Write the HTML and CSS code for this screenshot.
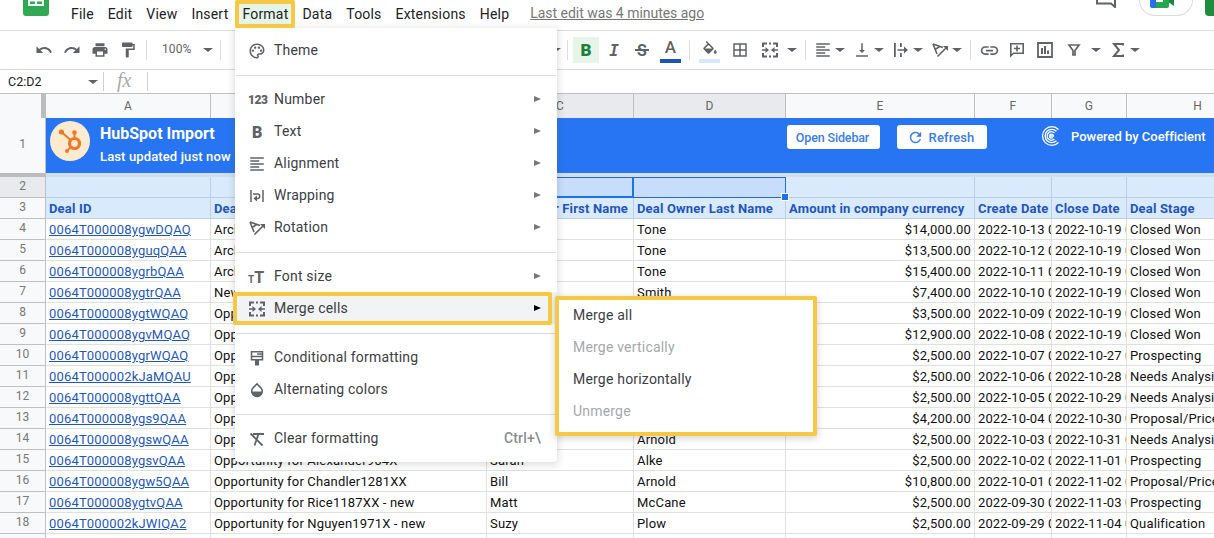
FILE: index.html
```html
<!DOCTYPE html>
<html lang="en">
<head>
  <meta charset="UTF-8">
  <title>HubSpot Import - Sheet</title>
  <link rel="stylesheet" href="styles.css">
</head>
<body>
  <!-- shared icons -->
  <svg class="sprite">
    <symbol id="merge" viewBox="0 0 18 18">
      <path d="M2 6V2.500h4M12 2.500h4V6M2 12v3.500h4M12 15.500h4V12" fill="none" stroke="currentColor" stroke-width="2"/>
      <path d="M8 1.500h2v2H8zM8 14.500h2v2H8zM1 8.200h3.500V6L8 9l-3.500 3V9.800H1zM17 8.200h-3.500V6L10 9l3.500 3V9.800H17z"/>
    </symbol>
    <symbol id="align" viewBox="0 0 24 24"><path d="M15 15H3v2h12v-2zm0-8H3v2h12V7zM3 13h18v-2H3v2zm0 8h18v-2H3v2zM3 3v2h18V3H3z"/></symbol>
    <symbol id="rotate" viewBox="0 0 18 18">
      <path d="M2 3l10 3.500M2 3l4 10M4 8.500l5-3.200M6.500 15.500L15.500 6.500" fill="none" stroke="currentColor" stroke-width="1.600"/>
      <path d="M12 5h5v5z"/>
    </symbol>
  </svg>

  <header class="menubar">
    <svg class="logo" viewBox="0 0 26 16"><path fill="#31a854" d="M0 0h26v13q0 3-3 3H3q-3 0-3-3z"/><path d="M6 0v5h14V0M6 .500h14M13 0v5" fill="none" stroke="#fff" stroke-width="1.800"/></svg>
    <nav class="menus">
      <span>File</span><span>Edit</span><span>View</span><span>Insert</span><span class="active">Format</span><span>Data</span><span>Tools</span><span>Extensions</span><span>Help</span>
    </nav>
    <a class="last-edit">Last edit was 4 minutes ago</a>
    <div class="account">
      <svg class="comments" viewBox="0 0 20 8"><path d="M1 0v3.500h14l4 3.500V0" fill="none" stroke="#5f6368" stroke-width="2"/></svg>
      <div class="meet">
        <svg viewBox="0 0 24 8"><path fill="#2671e8" d="M0 0h6v8H2q-2 0-2-2z"/><path fill="#26a750" d="M6 2h7V0h6v6q0 2-2 2H6z"/><path fill="#188a3c" d="M19 0h5v6l-5-3.500z"/></svg>
      </div>
      <div class="share"></div>
    </div>
  </header>

  <div class="toolbar">
    <span class="tool"><svg viewBox="0 0 24 24"><path d="M12.500 8c-2.650 0-5.050.99-6.900 2.600L2 7v9h9l-3.620-3.620c1.390-1.160 3.160-1.880 5.120-1.880 3.540 0 6.550 2.310 7.600 5.500l2.370-.78C21.080 11.030 17.150 8 12.500 8z"/></svg></span>
    <span class="tool"><svg viewBox="0 0 24 24"><path d="M18.400 10.600C16.550 8.990 14.150 8 11.500 8c-4.650 0-8.580 3.030-9.960 7.220L3.900 16c1.050-3.190 4.050-5.500 7.600-5.500 1.950 0 3.730.72 5.120 1.880L13 16h9V7l-3.600 3.600z"/></svg></span>
    <span class="tool"><svg viewBox="0 0 24 24"><path d="M19 8H5c-1.660 0-3 1.340-3 3v6h4v4h12v-4h4v-6c0-1.660-1.340-3-3-3zm-3 11H8v-5h8v5zm3-7c-.55 0-1-.45-1-1s.45-1 1-1 1 .45 1 1-.45 1-1 1zm-1-9H6v4h12V3z"/></svg></span>
    <span class="tool"><svg viewBox="0 0 24 24"><path d="M18 4V3c0-.55-.45-1-1-1H5c-.55 0-1 .45-1 1v4c0 .55.45 1 1 1h12c.55 0 1-.45 1-1V6h1v4H9v11c0 .55.45 1 1 1h2c.55 0 1-.45 1-1v-9h8V4h-3z"/></svg></span>
    <i class="sep ml4"></i>
    <span class="zoom">100%</span><i class="caret"></i>
    <i class="sep ml7"></i>
    <span class="font-tools"><i class="caret"></i></span>
    <i class="sep ml6"></i>
    <span class="tool bold-on">B</span>
    <span class="tool italic">I</span>
    <span class="tool strike">S</span>
    <span class="tool color-text">A</span>
    <i class="sep ml5"></i>
    <span class="tool fill"><svg viewBox="0 0 24 24"><path d="M16.560 8.940L7.620 0 6.210 1.410l2.380 2.380-5.150 5.150c-.59.59-.59 1.540 0 2.120l5.500 5.500c.29.29.68.44 1.060.44s.77-.15 1.060-.44l5.500-5.500c.59-.58.59-1.530 0-2.120zM5.210 10L10 5.210 14.790 10zM19 11.500s-2 2.170-2 3.500c0 1.100.9 2 2 2s2-.9 2-2c0-1.330-2-3.500-2-3.500z"/></svg></span>
    <span class="tool ml2"><svg viewBox="0 0 24 24"><path d="M3 3v18h18V3H3zm8 16H5v-6h6v6zm0-8H5V5h6v6zm8 8h-6v-6h6v6zm0-8h-6V5h6v6z"/></svg></span>
    <span class="tool ml2"><svg><use href="#merge"/></svg></span>
    <i class="caret ml3"></i>
    <i class="sep ml8"></i>
    <span class="combo ml5"><svg><use href="#align"/></svg><i class="caret"></i></span>
    <span class="combo"><svg viewBox="0 0 24 24"><path d="M16 12h-3V3h-2v9H8l4 4 4-4zM4 19v2h16v-2H4z"/></svg><i class="caret"></i></span>
    <span class="combo"><svg viewBox="0 0 18 18"><path d="M2 2h1.800v14H2zM8 2h1.800v4H8zM8 12h1.800v4H8zM5.500 8.200H12V5.500L16 9l-4 3.500V9.800H5.500z"/></svg><i class="caret"></i></span>
    <span class="combo"><svg><use href="#rotate"/></svg><i class="caret"></i></span>
    <i class="sep ml3"></i>
    <span class="tool big ml4"><svg viewBox="0 0 24 24"><path d="M3.900 12c0-1.710 1.390-3.100 3.100-3.100h4V7H7c-2.760 0-5 2.240-5 5s2.240 5 5 5h4v-1.900H7c-1.710 0-3.100-1.390-3.100-3.100zM8 13h8v-2H8v2zm9-6h-4v1.900h4c1.710 0 3.100 1.390 3.100 3.100s-1.390 3.100-3.100 3.100h-4V17h4c2.760 0 5-2.240 5-5s-2.240-5-5-5z"/></svg></span>
    <span class="tool"><svg viewBox="0 0 18 18"><path d="M2.800 2.800h12.400v9.400H5.500l-2.700 2.700zM9 4.500v6M6 7.500h6" fill="none" stroke="currentColor" stroke-width="1.600"/></svg></span>
    <span class="tool"><svg viewBox="0 0 18 18"><path d="M2 2h14v14H2z" fill="none" stroke="currentColor" stroke-width="1.800"/><path d="M5 7h2v6H5zM8 5h2v8H8zM11 9.500h2V13h-2z"/></svg></span>
    <span class="tool ml1"><svg viewBox="0 0 18 18"><path d="M4 4h10l-4 5.500V14H8V9.500z" fill="none" stroke="currentColor" stroke-width="1.700"/></svg></span>
    <i class="caret ml3"></i>
    <span class="combo ml5"><svg viewBox="0 0 18 18"><path d="M14 4.500V3H5l5 6-5 6h9v-1.500" fill="none" stroke="currentColor" stroke-width="2"/></svg><i class="caret"></i></span>
  </div>

  <div class="formula-bar">
    <span class="name-box">C2:D2</span><i class="caret"></i>
    <span class="fx">fx</span>
  </div>

  <main class="sheet">
    <div class="row col-heads">
      <b class="corner"></b><b>A</b><b>B</b><b class="sel">C</b><b class="sel">D</b><b>E</b><b>F</b><b>G</b><b>H</b>
    </div>
    <div class="banner-row">
      <div class="row-num">1</div>
      <div class="banner">
        <svg class="hubspot" viewBox="0 0 40 40">
          <circle cx="20" cy="20" r="20" fill="#fdebd0"/>
          <g fill="none" stroke="#f0782d"><circle cx="24.500" cy="22.500" r="5" stroke-width="3.200"/><path d="M11.500 11l9 8M24.500 12v6M20.500 26.500l-3.500 3.500" stroke-width="2"/></g>
          <g fill="#f0782d"><circle cx="11.500" cy="11" r="2.600"/><circle cx="24.500" cy="11.500" r="2.300"/><circle cx="17" cy="30" r="2"/></g>
        </svg>
        <div class="banner-text"><h1>HubSpot Import</h1><p>Last updated just now</p></div>
        <button class="open-btn">Open Sidebar</button>
        <button class="refresh-btn"><svg viewBox="0 0 24 24"><path d="M17.650 6.350C16.200 4.900 14.210 4 12 4c-4.420 0-7.990 3.580-7.990 8s3.570 8 7.990 8c3.730 0 6.840-2.550 7.730-6h-2.080c-.82 2.330-3.040 4-5.650 4-3.310 0-6-2.690-6-6s2.690-6 6-6c1.660 0 3.140.69 4.220 1.780L13 11h7V4l-2.350 2.350z"/></svg>Refresh</button>
        <div class="powered">
          <svg viewBox="0 0 20 20"><g fill="none" stroke="#fff" stroke-width="1.300"><path d="M17.500 3.500A9.300 9.300 0 1 0 17.500 16.500"/><path d="M15.500 5.200A6.700 6.700 0 1 0 15.500 14.800"/><path d="M13.500 7A4.300 4.300 0 1 0 13.500 13"/><path d="M8.500 10h4a2 2 0 1 0-.6 1.500"/></g></svg>
          Powered by Coefficient
        </div>
      </div>
    </div>
    <div class="freeze"></div>
    <div class="row blank">
      <b class="row-num sel">2</b><span></span><span></span><span class="sel current"></span><span class="sel last"><i class="handle"></i></span><span></span><span></span><span></span><span></span>
    </div>
    <div class="row titles">
      <b class="row-num">3</b><span>Deal ID</span><span>Deal Name</span><span class="right">Deal Owner First Name</span><span>Deal Owner Last Name</span><span>Amount in company currency</span><span>Create Date</span><span>Close Date</span><span>Deal Stage</span>
    </div>
    <div id="rows"></div>
  </main>

  <div class="menu">
    <div class="item"><svg viewBox="0 0 24 24"><path d="M12 22C6.490 22 2 17.510 2 12S6.490 2 12 2s10 4.040 10 9c0 3.310-2.690 6-6 6h-1.770c-.28 0-.5.22-.5.5 0 .12.05.23.13.33.41.47.64 1.060.64 1.670 0 1.380-1.120 2.500-2.500 2.500zm0-18c-4.410 0-8 3.590-8 8s3.590 8 8 8c.28 0 .5-.22.5-.5 0-.16-.08-.28-.14-.35-.41-.46-.63-1.050-.63-1.650 0-1.380 1.120-2.500 2.500-2.500H16c2.210 0 4-1.790 4-4 0-3.860-3.590-7-8-7z"/><circle cx="6.500" cy="11.500" r="1.600"/><circle cx="9.500" cy="7.500" r="1.600"/><circle cx="14.500" cy="7.500" r="1.600"/><circle cx="17.500" cy="11.500" r="1.600"/></svg>Theme</div>
    <hr>
    <div class="item sub"><span class="ico num">123</span>Number</div>
    <div class="item sub"><span class="ico b">B</span>Text</div>
    <div class="item sub"><svg><use href="#align"/></svg>Alignment</div>
    <div class="item sub"><svg viewBox="0 0 18 18"><path d="M3 3v12M15 3v12M5 7h5a2.300 2.300 0 0 1 0 4.500H8" fill="none" stroke="currentColor" stroke-width="1.500"/><path d="M9 8.500v6l-3.500-3z"/></svg>Wrapping</div>
    <div class="item sub"><svg><use href="#rotate"/></svg>Rotation</div>
    <hr>
    <div class="item sub"><span class="ico tt"><small>T</small>T</span>Font size</div>
    <div class="item sub hover"><svg><use href="#merge"/></svg>Merge cells</div>
    <hr>
    <div class="item"><svg viewBox="0 0 18 18"><path d="M3.500 2.800h11v8h-11zM3.500 7.500h11M9 5h5" fill="none" stroke="currentColor" stroke-width="1.500"/><path d="M7 11h4v5.500H7z"/></svg>Conditional formatting</div>
    <div class="item"><svg viewBox="0 0 24 24"><path d="M17.660 8L12 2.350 6.340 8C4.780 9.560 4 11.640 4 13.640s.78 4.110 2.340 5.670 3.610 2.350 5.660 2.350 4.100-.79 5.660-2.350S20 15.640 20 13.640 19.220 9.560 17.660 8zM6 14c.01-2 .62-3.270 1.760-4.400L12 5.270l4.240 4.380C17.380 10.770 17.990 12 18 14H6z"/></svg>Alternating colors</div>
    <hr>
    <div class="item"><svg viewBox="0 0 18 18"><path d="M5 4h11M2.500 3.500l12 12M10.500 4L6.500 15.500" fill="none" stroke="currentColor" stroke-width="1.800"/></svg>Clear formatting<kbd>Ctrl+\</kbd></div>
  </div>

  <div class="submenu">
    <div>Merge all</div>
    <div class="off">Merge vertically</div>
    <div>Merge horizontally</div>
    <div class="off">Unmerge</div>
  </div>
  <div class="mark mark-format"></div>
  <div class="mark mark-merge"></div>

  <script>
    // id, deal name, first name, last name, amount, created, closed, stage
    const deals = [
      ["0064T000008ygwDQAQ", "Arch", "", "Tone", "$14,000.00", "2022-10-13", "2022-10-19", "Closed Won"],
      ["0064T000008yguqQAA", "Arch", "", "Tone", "$13,500.00", "2022-10-12", "2022-10-19", "Closed Won"],
      ["0064T000008ygrbQAA", "Arch", "", "Tone", "$15,400.00", "2022-10-11", "2022-10-19", "Closed Won"],
      ["0064T000008ygtrQAA", "New", "", "Smith", "$7,400.00", "2022-10-10", "2022-10-19", "Closed Won"],
      ["0064T000008ygtWQAQ", "Opp", "", "", "$3,500.00", "2022-10-09", "2022-10-19", "Closed Won"],
      ["0064T000008ygvMQAQ", "Opp", "", "", "$12,900.00", "2022-10-08", "2022-10-19", "Closed Won"],
      ["0064T000008ygrWQAQ", "Opp", "", "", "$2,500.00", "2022-10-07", "2022-10-27", "Prospecting"],
      ["0064T000002kJaMQAU", "Opp", "", "", "$2,500.00", "2022-10-06", "2022-10-28", "Needs Analysis"],
      ["0064T000008ygttQAA", "Opp", "", "", "$2,500.00", "2022-10-05", "2022-10-29", "Needs Analysis"],
      ["0064T000008ygs9QAA", "Opp", "", "", "$4,200.00", "2022-10-04", "2022-10-30", "Proposal/Price"],
      ["0064T000008ygswQAA", "Opp", "", "Arnold", "$2,500.00", "2022-10-03", "2022-10-31", "Needs Analysis"],
      ["0064T000008ygsvQAA", "Opportunity for Alexander964X", "Sarah", "Alke", "$2,500.00", "2022-10-02", "2022-11-01", "Prospecting"],
      ["0064T000008ygw5QAA", "Opportunity for Chandler1281XX", "Bill", "Arnold", "$10,800.00", "2022-10-01", "2022-11-02", "Proposal/Price"],
      ["0064T000008ygtvQAA", "Opportunity for Rice1187XX - new", "Matt", "McCane", "$2,500.00", "2022-09-30", "2022-11-03", "Prospecting"],
      ["0064T000002kJWIQA2", "Opportunity for Nguyen1971X - new", "Suzy", "Plow", "$2,500.00", "2022-09-29", "2022-11-04", "Qualification"],
      ["", "", "", "", "", "", "", ""]
    ];

    document.getElementById("rows").innerHTML = deals.map((d, i) => {
      const cells = d.map((text, c) => {
        if (c === 0) return `<span><a>${text}</a></span>`;
        if (c === 4) return `<span class="right">${text}</span>`;
        // the time part runs into the next column and is cut there
        if ((c === 5 || c === 6) && text) return `<span class="date">${text} 0</span>`;
        return `<span>${text}</span>`;
      });
      return `<div class="row"><b class="row-num">${i + 4}</b>${cells.join("")}</div>`;
    }).join("");
  </script>
</body>
</html>
```
FILE: styles.css
```css
* { box-sizing: border-box; }
body {
  margin: 0;
  width: 1214px;
  height: 538px;
  overflow: hidden;
  position: relative;
  background: #fff;
  color: #202124;
  font-family: Roboto, Arial, sans-serif;
  font-size: 13px;
}
svg { fill: currentColor; flex: none; }
.sprite { display: none; }

/* menu bar */
.menubar {
  height: 31px;
  display: flex;
  border-bottom: 1px solid #dadce0;
}
.logo { width: 26px; height: 16px; margin-left: 23px; }
.menus {
  display: flex;
  margin-left: 15px;
  font-size: 14px;
  line-height: 28px;
  letter-spacing: .2px;
}
.menus span { height: 28px; padding: 0 7px; }
.menus .active { background: #e6f4ea; }
.last-edit {
  margin-left: 14px;
  font-size: 14px;
  line-height: 27px;
  letter-spacing: -.03px;
  color: #777;
  text-decoration: underline;
}
.account { display: flex; margin-left: auto; }
.comments { width: 20px; height: 8px; margin-right: 23px; }
.meet {
  width: 54px;
  height: 16px;
  padding-left: 10px;
  border: 1px solid #dadce0;
  border-top: 0;
  border-radius: 0 0 22px 22px;
  margin-right: 12px;
}
.meet svg { display: block; width: 24px; height: 8px; }
.share { width: 9px; height: 16px; background: #1e8e3e; border-radius: 0 0 0 4px; }

/* toolbar */
.toolbar {
  height: 39px;
  display: flex;
  align-items: center;
  padding-left: 30px;
  border-bottom: 1px solid #dadce0;
  color: #5f6368;
}
.tool {
  width: 28px;
  height: 26px;
  display: flex;
  flex: none;
  align-items: center;
  justify-content: center;
}
.tool svg { width: 18px; height: 18px; }
.tool.big svg { width: 21px; height: 21px; }
.sep { flex: none; width: 1px; height: 20px; background: #dadce0; }
.caret {
  flex: none;
  width: 10px;
  height: 4px;
  border: solid transparent;
  border-width: 4px 5px 0;
  border-top-color: #5f6368;
  background-clip: padding-box;
}
.combo { width: 39px; flex: none; display: flex; align-items: center; }
.combo svg { width: 18px; height: 18px; margin: 0 3px; }
.ml1 { margin-left: 1px; }
.ml2 { margin-left: 2px; }
.ml3 { margin-left: 3px; }
.ml4 { margin-left: 4px; }
.ml5 { margin-left: 5px; }
.ml6 { margin-left: 6px; }
.ml7 { margin-left: 7px; }
.ml8 { margin-left: 8px; }
.zoom { width: 41px; margin-left: 15px; padding-bottom: 2px; font-size: 12px; letter-spacing: .1px; }
.font-tools { width: 340px; flex: none; display: flex; justify-content: flex-end; }
.bold-on {
  width: 26px;
  margin-left: 5px;
  background: #e6f4ea;
  color: #188038;
  font-size: 17px;
  font-weight: 900;
}
.italic { margin-left: 1px; font: italic bold 16px "DejaVu Sans Mono", monospace; }
.strike { font-size: 16px; font-weight: 700; position: relative; }
.strike::after {
  content: "";
  position: absolute;
  left: 7px;
  top: 12px;
  width: 14px;
  height: 2px;
  background: #5f6368;
}
.color-text {
  width: 21px;
  margin-left: 4px;
  margin-right: 3px;
  font-size: 17px;
  font-weight: 500;
  line-height: 20px;
  align-items: flex-start;
  border-bottom: 4px solid #1a56b8;
}
.fill {
  width: 21px;
  margin: 0 4px 0 9px;
  border-bottom: 4px solid #d8e7fb;
}
.fill svg { position: relative; top: 2px; }

/* formula bar */
.formula-bar {
  height: 23px;
  display: flex;
  align-items: center;
}
.name-box { width: 80px; padding-left: 8px; font-size: 12.500px; }
.name-box + .caret { margin-left: 8px; }
.fx {
  margin-left: 5px;
  width: 45px;
  height: 19px;
  padding-left: 13px;
  border: solid #d0d0d0;
  border-width: 0 1px;
  font: italic 20px/17px "Liberation Serif", serif;
  color: #aaa;
}

/* grid */
.row {
  display: grid;
  grid-template-columns: 46px 165px 276px 147px 152px 189px 77px 75px 142px;
  height: 21px;
  color: #111;
  letter-spacing: .17px;
}
.row > span {
  border-right: 1px solid #e0e0e0;
  border-bottom: 1px solid #e0e0e0;
  padding-left: 3px;
  line-height: 22px;
  white-space: nowrap;
  overflow: hidden;
}
.row > .right { text-align: right; padding-right: 3px; }
.row > .date { letter-spacing: .1px; }
.row a { color: #1f57b8; text-decoration: underline; }
.row > .row-num, .row-num {
  background: #f8f9fa;
  border-right: 1px solid #c0c0c0;
  border-bottom: 1px solid #c0c0c0;
  color: #777;
  font-size: 12px;
  font-weight: 400;
  line-height: 18px;
  letter-spacing: 0;
  text-align: center;
}
.row > .row-num.sel { background: #e8eaed; }
.col-heads { height: 25px; border-top: 1px solid #c0c0c0; }
.col-heads b {
  background: #f8f9fa;
  border-right: 1px solid #c0c0c0;
  border-bottom: 1px solid #c0c0c0;
  color: #666;
  font-size: 12px;
  font-weight: 400;
  line-height: 24px;
  text-align: center;
}
.col-heads .sel { background: #e8eaed; }
.col-heads .corner { border-right: 5px solid #bcbcbc; }
.freeze { height: 4px; background: linear-gradient(90deg, #bcbcbc 46px, #d3deeb 46px); }
.blank > span, .titles > span {
  background: #d9eafd;
  border-color: #bccfe4;
}
.titles > span { color: #1f55bd; font-weight: 700; }
.titles > .right { padding-right: 5px; }
.blank > .sel {
  background: #c6defb;
  border-top: 1px solid #2468cc;
  border-bottom: 1px solid #2468cc;
}
.blank > .row-num.sel { border-top: 0; border-bottom-color: #c0c0c0; }
.blank > .current {
  border-right: 2px solid #1a73e8;
  border-bottom: 2px solid #1a73e8;
}
.blank > .last { border-right: 1px solid #1a73e8; position: relative; overflow: visible; }
.handle {
  position: absolute;
  right: -4px;
  bottom: -4px;
  width: 8px;
  height: 8px;
  background: #1a73e8;
  border: 1px solid #fff;
}

/* import banner */
.banner-row { display: flex; height: 55px; }
.banner-row .row-num { width: 46px; line-height: 53px; border-bottom: 0; }
.banner {
  flex: 1;
  display: flex;
  align-items: flex-start;
  background: #2775f2;
  color: #fff;
  padding-left: 4px;
}
.hubspot { width: 40px; height: 40px; margin-top: 3px; }
.banner-text { width: 687px; margin-left: 10px; }
.banner-text h1 { margin: 6px 0 0; font-size: 16px; line-height: 20px; letter-spacing: 0; }
.banner-text p { margin: 4px 0 0; font-weight: 500; line-height: 18px; letter-spacing: .13px; }
.banner button {
  height: 24px;
  margin-top: 7px;
  padding: 0;
  border: 0;
  border-radius: 3px;
  background: #fff;
  color: #3b7de8;
  font: 500 13px Roboto, sans-serif;
  display: flex;
  align-items: center;
  justify-content: center;
}
.banner .open-btn { width: 93px; padding-right: 2px; font-size: 12.500px; letter-spacing: -.15px; }
.banner .refresh-btn { width: 90px; margin-left: 17px; padding-right: 3px; gap: 5px; letter-spacing: .1px; }
.refresh-btn svg { width: 17px; height: 17px; }
.powered {
  display: flex;
  align-items: center;
  gap: 10px;
  margin: 8px 0 0 54px;
  font-weight: 500;
  letter-spacing: -.02px;
  white-space: nowrap;
}
.powered svg { width: 20px; height: 20px; }

/* format menu */
.menu {
  position: absolute;
  left: 235px;
  top: 28px;
  width: 322px;
  height: 434px;
  padding-top: 6px;
  background: #fff;
  border-radius: 0 0 4px 4px;
  box-shadow: 0 2px 6px 2px rgba(60, 64, 67, .15);
  font-size: 14px;
  letter-spacing: .2px;
  color: #3c4043;
}
.menu hr { margin: 9px 1px 7px; border: 0; height: 1px; background: #dadce0; }
.item { height: 32px; display: flex; align-items: center; padding: 0 16px 0 13px; }
.item svg { width: 18px; height: 18px; margin-right: 8px; color: #5f6368; position: relative; top: 1px; }
.ico { width: 26px; color: #5f6368; font-weight: 900; letter-spacing: 0; position: relative; top: 1px; }
.ico.num { font-size: 12px; letter-spacing: -.5px; }
.ico.b { padding-left: 4px; font-size: 16px; }
.ico.tt { font-size: 16px; font-weight: 700; }
.ico.tt small { font-size: 10px; }
.sub::after {
  content: "";
  margin-left: auto;
  border: solid transparent;
  border-width: 3.500px 0 3.500px 7px;
  border-left-color: #777;
}
.hover { background: #f1f3f4; }
.hover::after { border-left-color: #000; }
.item kbd { margin-left: auto; font: 500 14px Roboto, sans-serif; color: #8a8d91; }

.submenu {
  position: absolute;
  left: 555px;
  top: 296px;
  width: 262px;
  height: 140px;
  padding-left: 14px;
  border: 4px solid #f5c846;
  border-radius: 2px;
  background: #fff;
  box-shadow: 0 2px 6px 1px rgba(60, 64, 67, .2);
  font-size: 14px;
  line-height: 32px;
  letter-spacing: .2px;
  color: #3c4043;
}
.submenu div:first-child { margin-top: -1px; }
.submenu .off { color: #a5a8ab; }

.mark { position: absolute; border: 4px solid #f5c846; border-radius: 2px; }
.mark-format { left: 235px; top: 0; width: 60px; height: 28px; }
.mark-merge { left: 233px; top: 292px; width: 319px; height: 33px; }
```
